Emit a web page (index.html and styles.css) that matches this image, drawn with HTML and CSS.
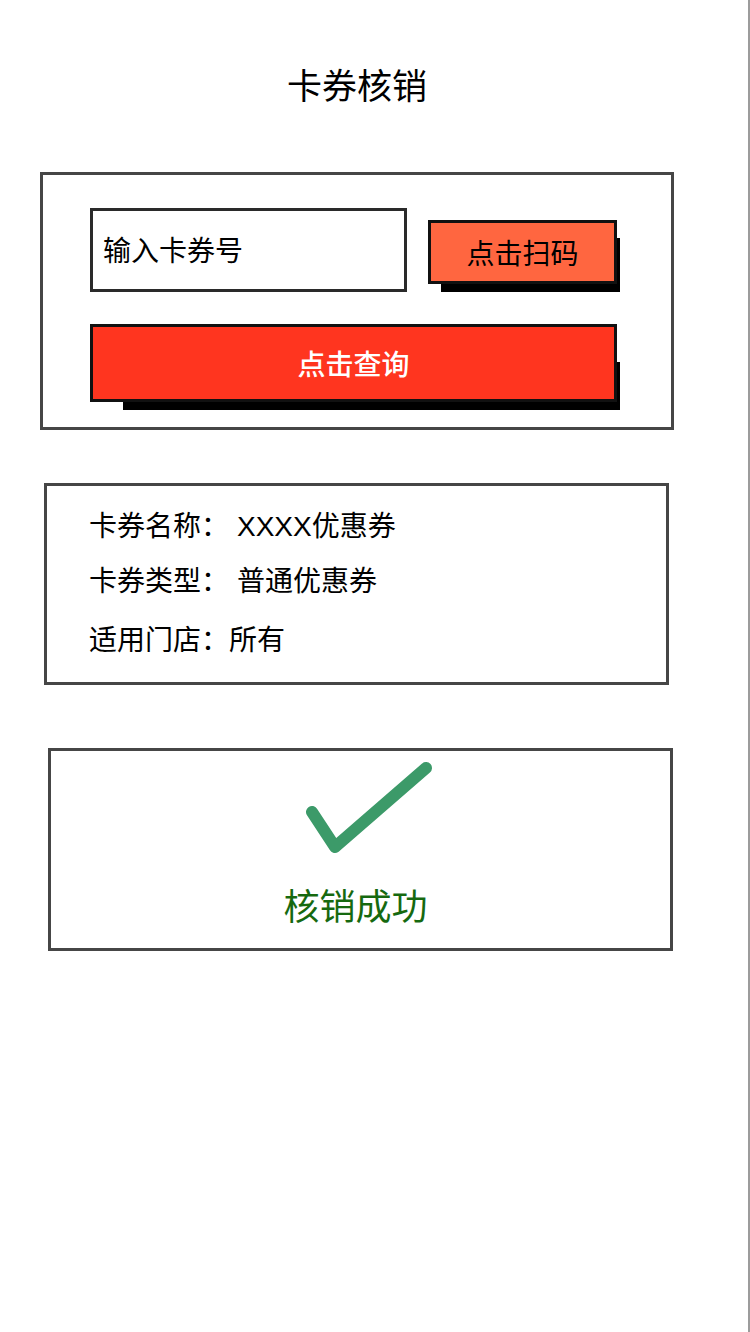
FILE: index.html
```html
<!DOCTYPE html>
<html lang="zh-CN">
<head>
    <meta charset="UTF-8">
    <meta name="viewport" content="width=device-width, initial-scale=1.0">
    <title>卡券核销</title>
    <link rel="stylesheet" href="styles.css">
</head>
<body>
    <div class="page">
        <h1 class="title">卡券核销</h1>

        <div class="panel search-panel">
            <div class="search-row">
                <div class="code-input">输入卡券号</div>
                <button class="scan-btn">点击扫码</button>
            </div>
            <button class="query-btn">点击查询</button>
        </div>

        <div class="panel info-panel">
            <div class="info-row">卡券名称：<span class="info-value">XXXX优惠券</span></div>
            <div class="info-row">卡券类型：<span class="info-value">普通优惠券</span></div>
            <div class="info-row last">适用门店：所有</div>
        </div>

        <div class="panel result-panel">
            <svg class="check" width="160" height="100" viewBox="0 0 160 100">
                <path d="M31 52 L54 87 L145 8" fill="none" stroke="#3c9a69" stroke-width="12" stroke-linecap="round" stroke-linejoin="round"/>
            </svg>
            <div class="result-text">核销成功</div>
        </div>
    </div>
</body>
</html>
```

FILE: styles.css
```css
* {
    margin: 0;
    padding: 0;
    box-sizing: border-box;
    font-family: "Liberation Sans", "Noto Sans CJK SC", sans-serif;
}

body {
    background: #fff;
}

.page {
    width: 750px;
    min-height: 100vh;
    border-right: 2px solid #9c9c9c;
    padding-top: 66px;
}

.title {
    width: 714px;
    text-align: center;
    font-size: 35px;
    font-weight: normal;
    line-height: 42px;
    color: #000;
}

.panel {
    border: 3px solid #464646;
    background: #fff;
}

.search-panel {
    width: 634px;
    height: 258px;
    margin: 64px 0 0 40px;
    padding: 33px 0 0 47px;
}

.search-row {
    display: flex;
    align-items: center;
    gap: 21px;
}

.code-input {
    width: 317px;
    height: 84px;
    border: 3px solid #2a2a2a;
    padding: 3px 0 0 10px;
    font-size: 28px;
    line-height: 76px;
    color: #000;
}

.scan-btn {
    width: 189px;
    height: 64px;
    margin-top: 4px;
    border: 3px solid #111;
    background: #ff6640;
    color: #000;
    font-size: 28px;
    box-shadow: 8px 13px 0 -5px #000;
}

.query-btn {
    display: block;
    width: 527px;
    height: 78px;
    margin-top: 32px;
    border: 3px solid #111;
    background: #ff351f;
    color: #fff;
    font-size: 28px;
    font-weight: 500;
    box-shadow: 18px 23px 0 -15px #000;
}

.info-panel {
    width: 625px;
    height: 202px;
    margin: 53px 0 0 44px;
    padding: 21px 0 0 42px;
}

.info-row {
    font-size: 28px;
    line-height: 40px;
    color: #000;
    margin-bottom: 15px;
}

.info-row.last {
    margin-top: 19px;
    margin-bottom: 0;
}

.info-value {
    margin-left: 8px;
}

.result-panel {
    width: 625px;
    height: 203px;
    margin: 63px 0 0 48px;
    display: flex;
    flex-direction: column;
    align-items: center;
}

.check {
    display: block;
    margin-top: 9px;
    margin-left: 0;
}

.result-text {
    margin-top: 23px;
    margin-left: -10px;
    font-size: 36px;
    line-height: 50px;
    color: #16690f;
}
```
